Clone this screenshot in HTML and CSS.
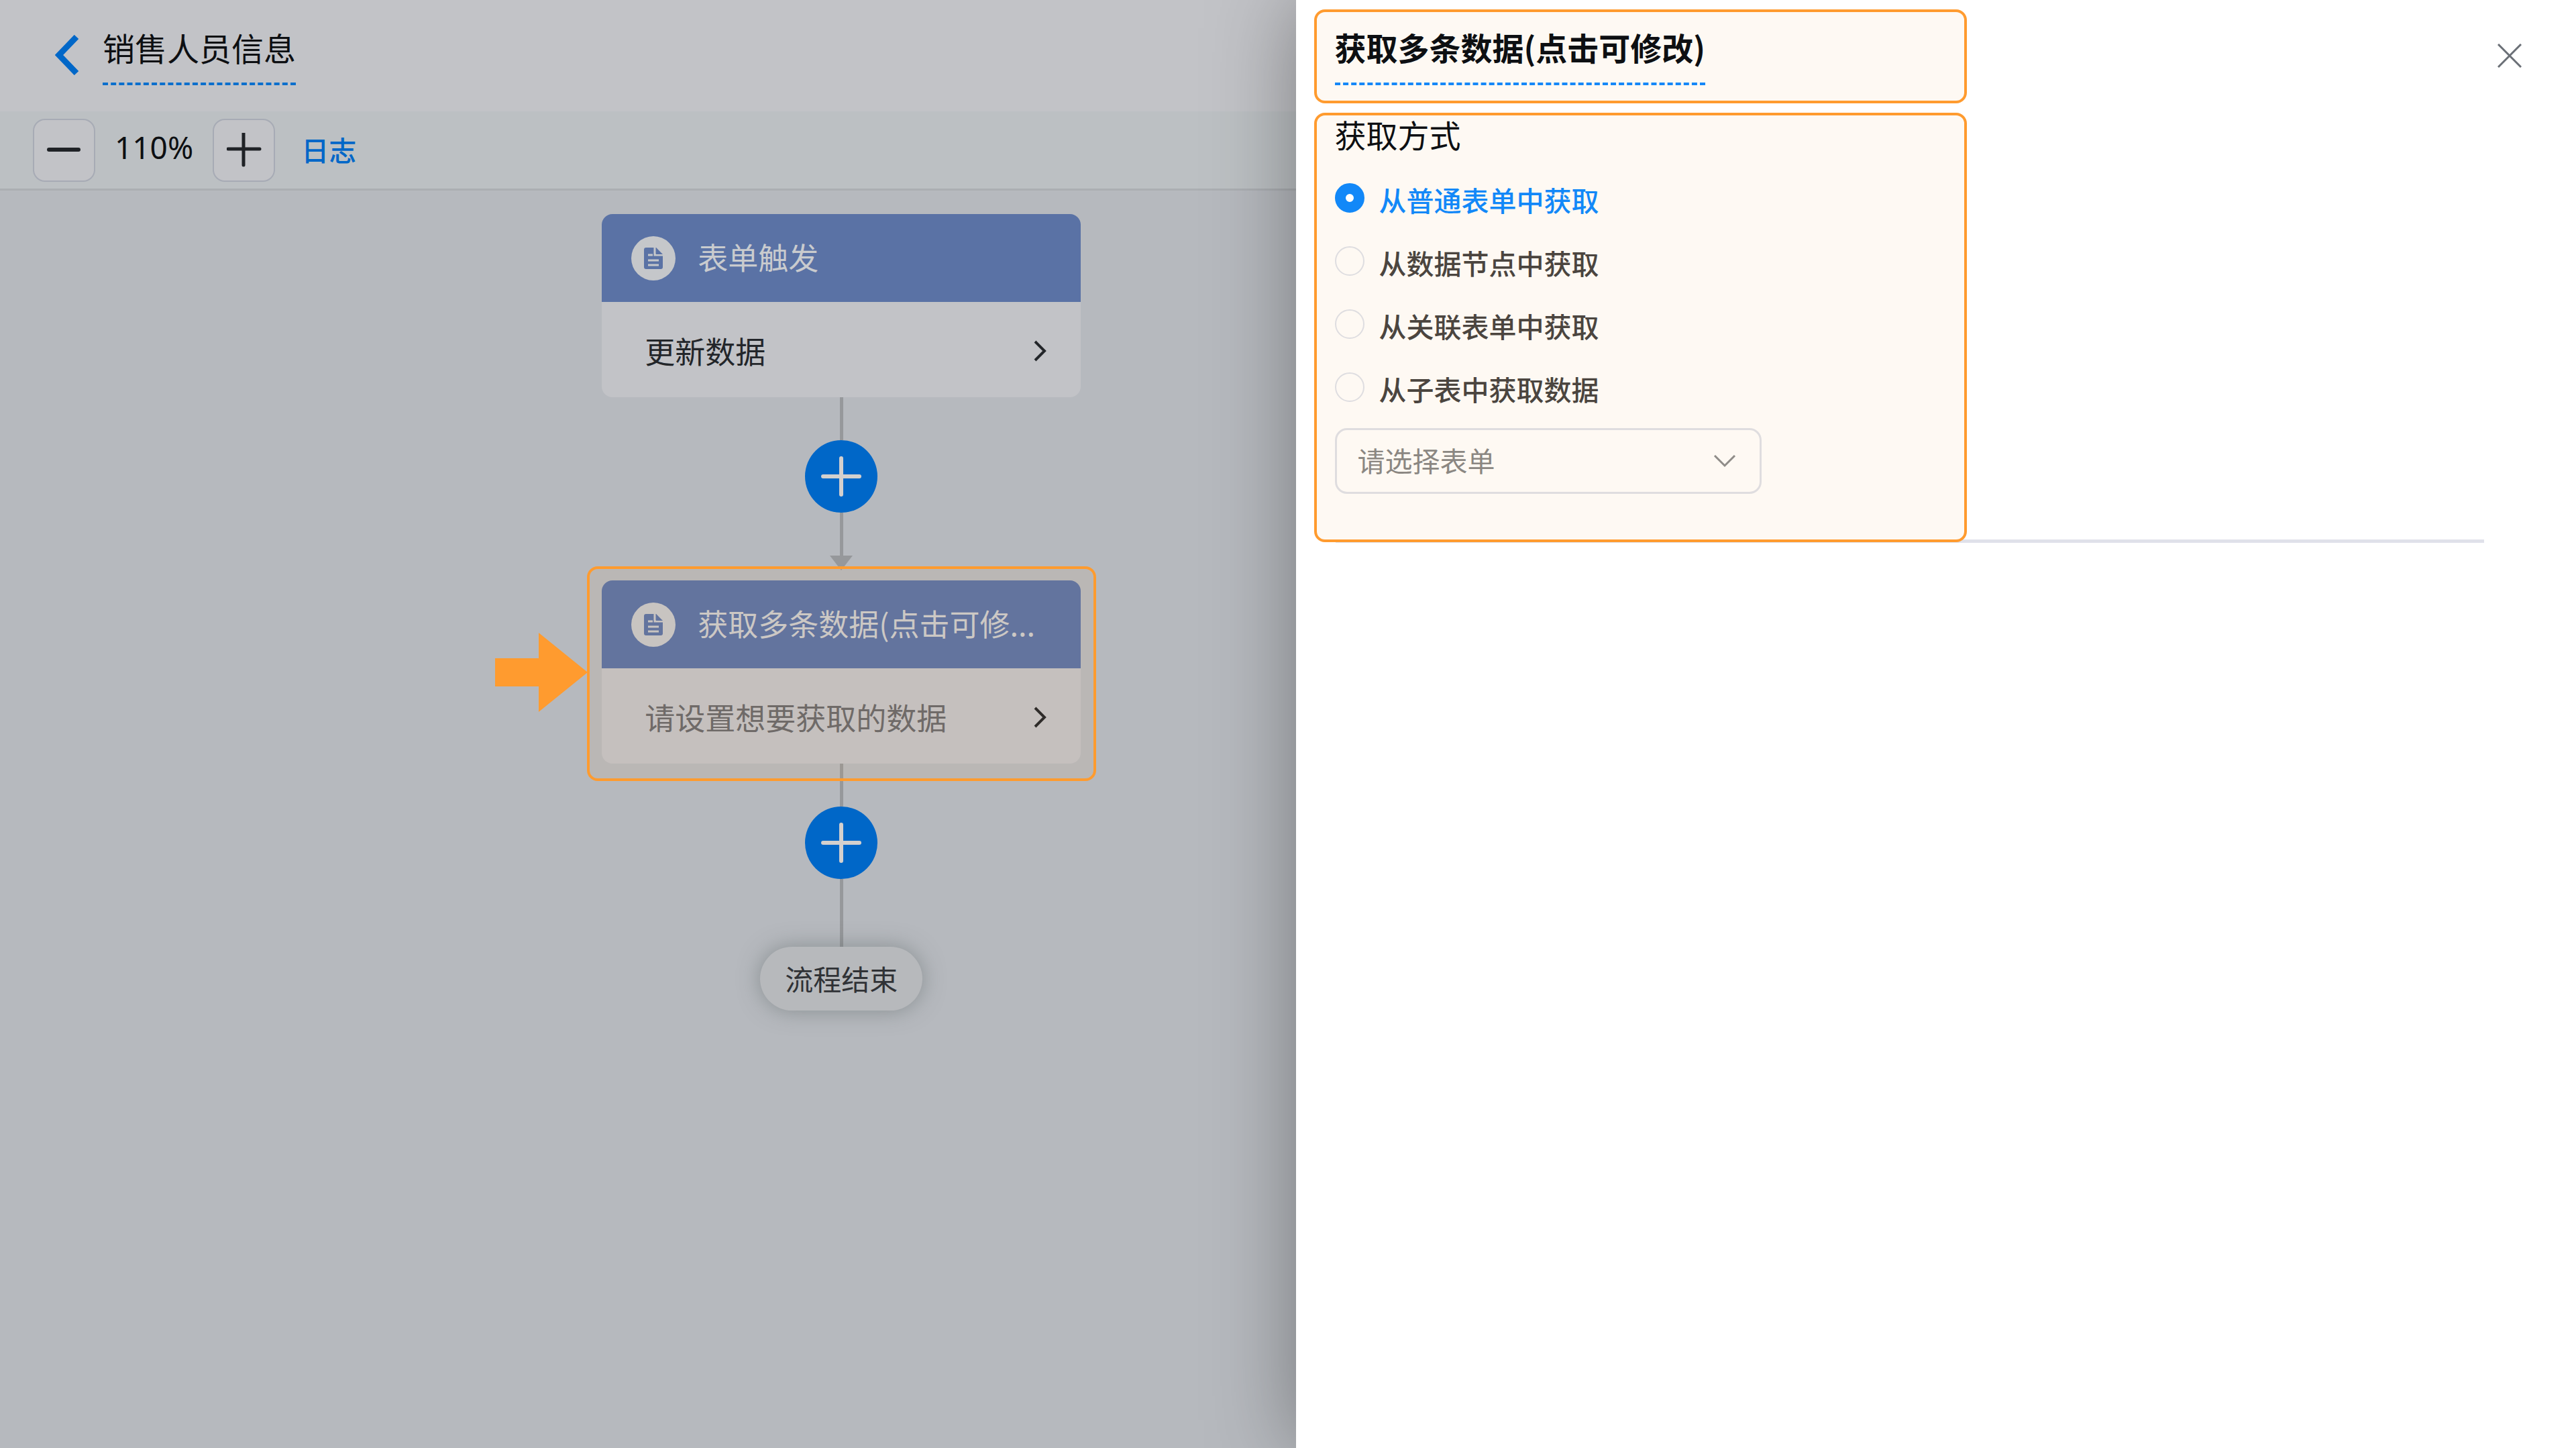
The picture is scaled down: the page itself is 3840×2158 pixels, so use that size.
FILE: index.html
```html
<!DOCTYPE html>
<html lang="zh-CN">
<head>
<meta charset="utf-8">
<title>销售人员信息</title>
<link rel="stylesheet" href="styles.css">
</head>
<body>
<div class="app">
  <main class="workflow">
    <header class="topbar">
      <a class="back" href="#" aria-label="返回">
        <svg width="36" height="60" viewBox="0 0 36 60"><path d="M32 3L6 30L32 57" fill="none" stroke="#0067c8" stroke-width="9"/></svg>
      </a>
      <h1 class="title">销售人员信息</h1>
    </header>
    <div class="toolbar">
      <button class="zoom-btn" type="button" aria-label="缩小">
        <svg width="52" height="52" viewBox="0 0 52 52"><path d="M3 25H47" stroke="#1f2226" stroke-width="6" stroke-linecap="round"/></svg>
      </button>
      <span class="zoom-value">110%</span>
      <button class="zoom-btn" type="button" aria-label="放大">
        <svg width="52" height="52" viewBox="0 0 52 52"><path d="M2 24H49M25 0V48" stroke="#1f2226" stroke-width="5" stroke-linecap="round"/></svg>
      </button>
      <a class="log-link" href="#">日志</a>
    </div>

    <div class="canvas">
      <div class="flow">
        <section class="node">
          <div class="node-head">
            <svg class="node-icon" viewBox="0 0 66 66">
              <circle cx="33" cy="33" r="33" fill="#c5c7ca"/>
              <path d="M22 17H37L47 29V46a3 3 0 0 1-3 3H22a3 3 0 0 1-3-3V20a3 3 0 0 1 3-3z" fill="#5a72a5"/>
              <path d="M35 16V28H48M25 28H32M25 36H41M25 43H41" fill="none" stroke="#c5c7ca" stroke-width="3"/>
              <path d="M37 17L47 27H37z" fill="#5a72a5"/>
            </svg>
            <span>表单触发</span>
          </div>
          <button class="node-body" type="button">
            <span>更新数据</span>
            <svg width="22" height="34" viewBox="0 0 22 34"><path d="M4 3L18 17L4 31" fill="none" stroke="#23262a" stroke-width="4"/></svg>
          </button>
        </section>

        <div class="connector">
          <i class="line"></i>
          <button class="add" type="button" aria-label="添加节点">
            <svg width="60" height="60" viewBox="0 0 60 60"><path d="M3 30H57M30 3V57" stroke="#d3d0ce" stroke-width="6" stroke-linecap="round"/></svg>
          </button>
          <i class="line"></i>
          <i class="arrow"></i>
        </div>

        <section class="node">
          <div class="node-head">
            <svg class="node-icon" viewBox="0 0 66 66">
              <circle cx="33" cy="33" r="33" fill="#c5c7ca"/>
              <path d="M22 17H37L47 29V46a3 3 0 0 1-3 3H22a3 3 0 0 1-3-3V20a3 3 0 0 1 3-3z" fill="#5a72a5"/>
              <path d="M35 16V28H48M25 28H32M25 36H41M25 43H41" fill="none" stroke="#c5c7ca" stroke-width="3"/>
              <path d="M37 17L47 27H37z" fill="#5a72a5"/>
            </svg>
            <span>获取多条数据(点击可修...</span>
          </div>
          <button class="node-body unset" type="button">
            <span>请设置想要获取的数据</span>
            <svg width="22" height="34" viewBox="0 0 22 34"><path d="M4 3L18 17L4 31" fill="none" stroke="#23262a" stroke-width="4"/></svg>
          </button>
          <div class="marker"></div>
          <svg class="pointer" viewBox="0 0 138 118"><path d="M0 38H65V0L138 59L65 118V80H0z" fill="#ff9b2f"/></svg>
        </section>

        <div class="connector">
          <i class="line"></i>
          <button class="add" type="button" aria-label="添加节点">
            <svg width="60" height="60" viewBox="0 0 60 60"><path d="M3 30H57M30 3V57" stroke="#d3d0ce" stroke-width="6" stroke-linecap="round"/></svg>
          </button>
          <i class="line grow"></i>
        </div>

        <div class="flow-end">流程结束</div>
      </div>
    </div>
  </main>

  <aside class="drawer">
    <header class="drawer-head">
      <div class="boxed">
        <h2 class="title strong">获取多条数据(点击可修改)</h2>
      </div>
      <button class="close" type="button" aria-label="关闭">
        <svg width="36" height="36" viewBox="0 0 36 36"><path d="M1 1L35 35M35 1L1 35" stroke="#6a6f76" stroke-width="3"/></svg>
      </button>
    </header>

    <form class="boxed source">
      <div role="radiogroup" aria-labelledby="source-label">
        <h3 class="label" id="source-label">获取方式</h3>
        <label class="option"><input type="radio" name="source" checked><span>从普通表单中获取</span></label>
        <label class="option"><input type="radio" name="source"><span>从数据节点中获取</span></label>
        <label class="option"><input type="radio" name="source"><span>从关联表单中获取</span></label>
        <label class="option"><input type="radio" name="source"><span>从子表中获取数据</span></label>
      </div>
      <div class="picker">
        <select aria-label="请选择表单">
          <option>请选择表单</option>
        </select>
        <svg width="34" height="20" viewBox="0 0 34 20"><path d="M2 2L17 17L32 2" fill="none" stroke="#8f8c88" stroke-width="3"/></svg>
      </div>
    </form>
    <hr class="divider">
  </aside>
</div>
</body>
</html>
```

FILE: styles.css
```css
* { box-sizing: border-box; }
body {
  margin: 0;
  font: 45px/60px "Noto Sans CJK SC", "Noto Sans", sans-serif;
  color: #0d0f12;
}
h1, h2, h3 { margin: 0; font-weight: 400; }
button, select { font: inherit; color: inherit; margin: 0; padding: 0; }
svg { display: block; flex: none; }

.app { display: flex; min-height: 100vh; overflow: hidden; }

/* workflow editor, dimmed behind the drawer */
.workflow {
  flex: 1;
  min-width: 0;
  display: flex;
  flex-direction: column;
  background: #b6b9be;
}
.topbar {
  display: flex;
  align-items: flex-start;
  gap: 35px;
  height: 166px;
  padding: 40px 0 0 82px;
  background: #c2c3c7;
}
.back { padding-top: 12px; }
.title {
  font-size: 47px;
  line-height: 60px;
  padding-bottom: 23px;
  border-bottom: 4px dashed #0b6fcd;
}
.topbar .title { font-size: 48px; }
.toolbar {
  display: flex;
  align-items: center;
  gap: 29px;
  padding: 11px 0 10px 49px;
  background: #bcc0c3;
  border-bottom: 3px solid #abaeb2;
}
.zoom-btn {
  display: flex;
  align-items: center;
  justify-content: center;
  width: 93px;
  height: 94px;
  background: #c2c3c7;
  border: 2px solid #a7abb5;
  border-radius: 18px;
}
.zoom-value { font: 46px/60px "Noto Sans", sans-serif; padding-bottom: 10px; }
.log-link {
  margin-left: 10px;
  padding-bottom: 4px;
  font-size: 41px;
  font-weight: 500;
  color: #0067c8;
  text-decoration: none;
}

.canvas {
  flex: 1;
  display: flex;
  justify-content: center;
  padding: 35px 0 0 577px;
}
.flow { width: 714px; display: flex; flex-direction: column; align-items: center; }
.node { position: relative; width: 100%; }
.node-head {
  display: flex;
  align-items: center;
  gap: 33px;
  height: 131px;
  padding-left: 44px;
  background: #5a72a5;
  border-radius: 16px 16px 0 0;
  color: #c9cbce;
  white-space: nowrap;
}
.node-head span { padding-bottom: 3px; }
.node-icon { width: 66px; height: 66px; }
.node-body {
  display: flex;
  align-items: center;
  justify-content: space-between;
  width: 100%;
  height: 142px;
  padding: 4px 50px 0 64px;
  background: #c2c3c7;
  border: 0;
  border-radius: 0 0 16px 16px;
  color: #23262a;
}
.unset span { color: #66686c; }

.connector { display: flex; flex-direction: column; align-items: center; height: 273px; }
.line { width: 5px; height: 64px; background: #96989b; }
.grow { flex: 1; }
.arrow { border: 17px solid transparent; border-top: 22px solid #96989b; border-bottom: 0; }
.add {
  display: flex;
  align-items: center;
  justify-content: center;
  width: 108px;
  height: 108px;
  flex: none;
  background: #0067c8;
  border: 0;
  border-radius: 50%;
}
.flow-end {
  padding: 17px 37px 18px;
  font-size: 42px;
  color: #303236;
  background: #b7b9bc;
  border-radius: 48px;
  box-shadow: 0 0 32px rgba(90, 100, 100, .5);
}

/* guide marks over the selected node */
.marker {
  position: absolute;
  inset: -21px -23px -26px -22px;
  background: rgba(255, 155, 47, .06);
  border: 4px solid #ff9b2f;
  border-radius: 16px;
  pointer-events: none;
}
.pointer { position: absolute; width: 138px; right: 735px; top: 78px; }

/* settings drawer */
.drawer {
  position: relative;
  width: 49.7%;
  background: #fff;
  box-shadow: 0 0 120px rgba(0, 0, 0, .35);
}
.boxed {
  width: 51%;
  margin-left: 27px;
  padding: 0 27px;
  background: #fef9f3;
  border: 4px solid #ff9b2f;
  border-radius: 16px;
}
.drawer-head { display: flex; justify-content: space-between; padding-top: 14px; }
.drawer-head .boxed { height: 140px; padding-top: 22px; }
.strong { display: inline-block; font-weight: 700; border-color: #1588f8; }
.close {
  align-self: flex-start;
  margin: 51px 81px 0 0;
  background: none;
  border: 0;
}
.source { position: relative; margin-top: 14px; height: 640px; }
.label { font-size: 47px; line-height: 56px; }
.option {
  display: flex;
  align-items: center;
  gap: 22px;
  height: 94px;
  font-size: 41px;
  font-weight: 500;
  color: #4b453f;
}
.option:nth-of-type(1) { margin-top: 22px; }
.option input {
  appearance: none;
  width: 44px;
  height: 44px;
  margin: 0 0 4px;
  border: 2px solid #dedde0;
  border-radius: 50%;
}
.option input:checked { border: 16px solid #1288f8; background: #fff; }
.option input:checked + span { color: #1288f8; }
.picker {
  display: flex;
  align-items: center;
  width: 636px;
  margin-top: 12px;
}
.picker select {
  appearance: none;
  width: 100%;
  height: 98px;
  padding: 0 90px 4px 31px;
  font-size: 41px;
  color: #8b8782;
  background: transparent;
  border: 3px solid #dfdddf;
  border-radius: 18px;
}
.picker svg { margin-left: -72px; pointer-events: none; }
.divider {
  height: 5px;
  margin: -4px 137px 0 59px;
  background: #e0e1ea;
  border: 0;
}
```
